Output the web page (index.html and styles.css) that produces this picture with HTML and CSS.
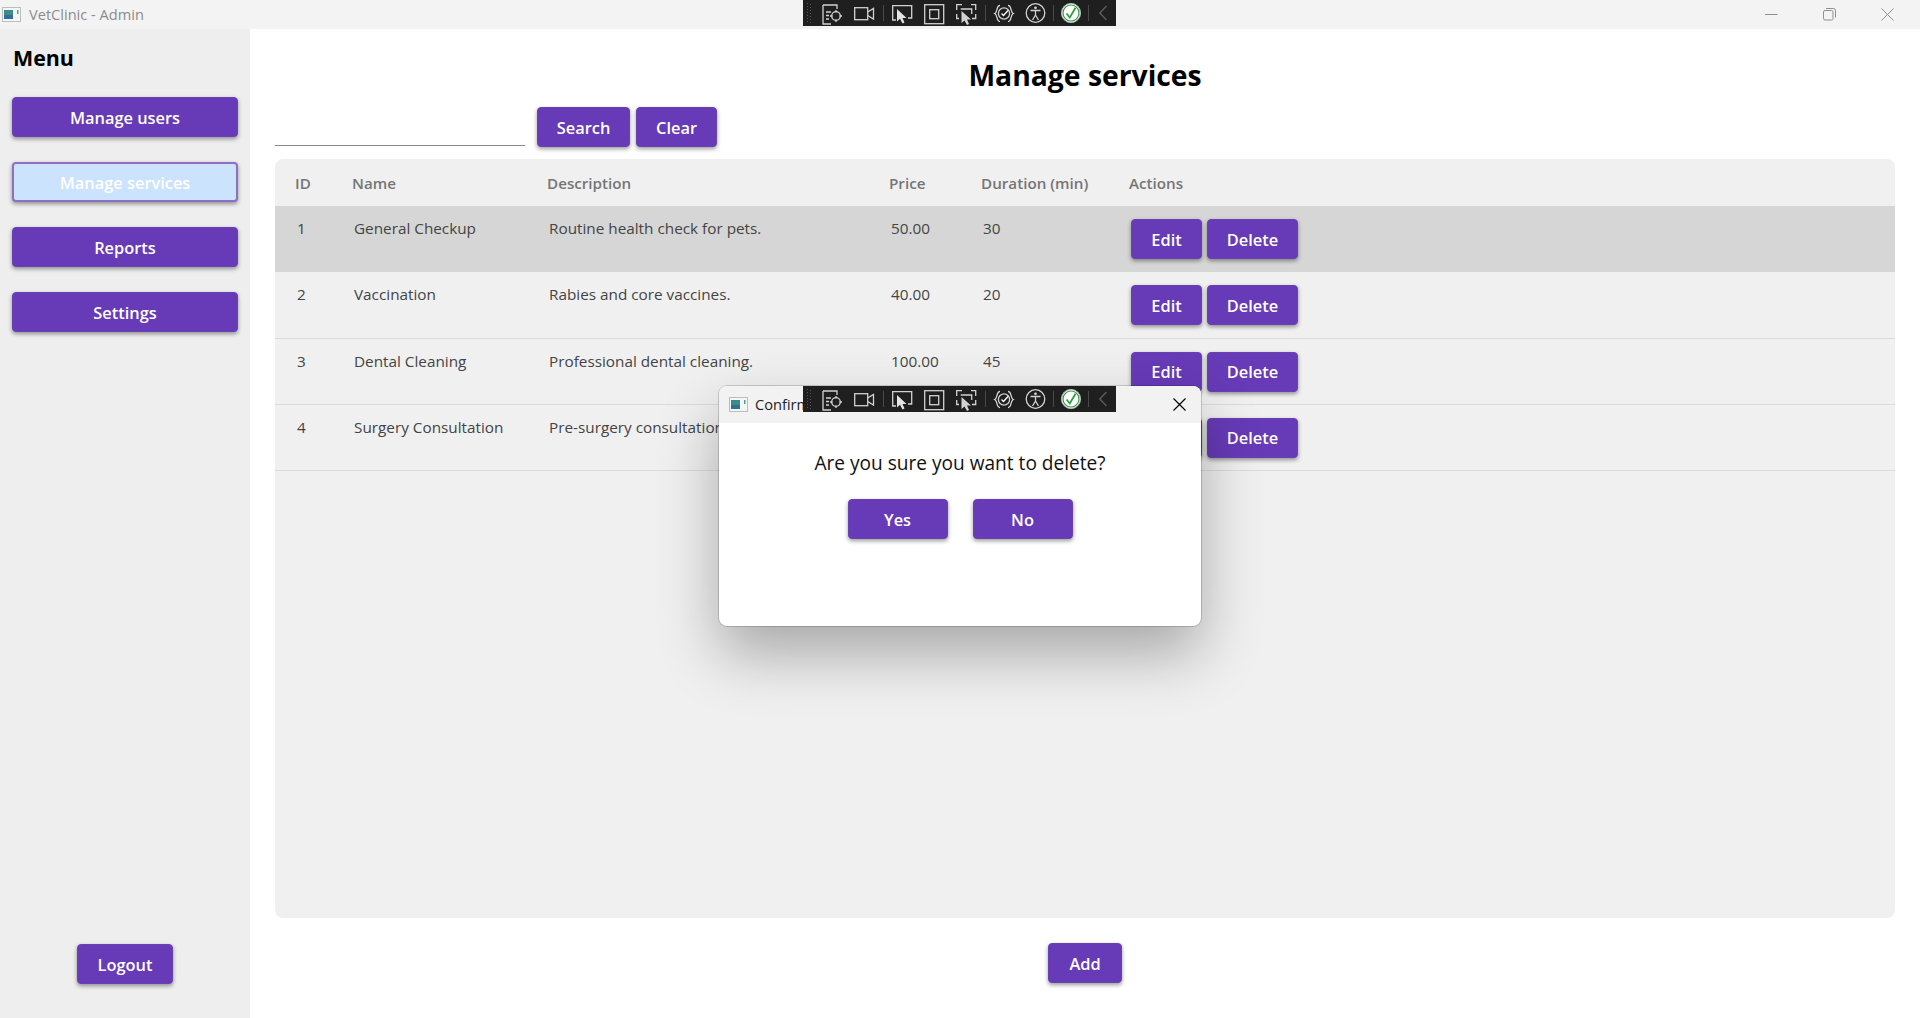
FILE: index.html
```html
<!DOCTYPE html>
<html>
<head>
    <meta charset="UTF-8">
    <title>VetClinic - Admin</title>
    <link rel="stylesheet" href="styles.css">
</head>
<body>
    <svg class="defs" width="0" height="0">
        <symbol id="app-icon" viewBox="0 0 19 15">
            <rect x="0.5" y="0.5" width="18" height="14" fill="#f4f6f6" stroke="#b9bdbd"/>
            <rect x="2" y="3" width="9" height="9" fill="#3f8a86"/>
            <rect x="2" y="8" width="9" height="4" fill="#2f6f9a"/>
            <rect x="15" y="3" width="1.5" height="4" fill="#5a9a94"/>
        </symbol>
        <symbol id="devbar" viewBox="0 0 313 26">
            <rect width="313" height="26" fill="#1f1f1f"/>
            <g fill="none" stroke="#565656" stroke-dasharray="1 2">
                <path d="M4.5 3V24M7.5 4V24"/>
            </g>
            <g fill="none" stroke="#d2d2d2" stroke-width="1.3">
                <path d="M20 5V24H28"/>
                <path d="M20 5H34V9"/>
                <path d="M23 12H28M23 15.5H26M23 19H26"/>
                <circle cx="33" cy="16" r="4.3"/>
                <path d="M33 10V12.5M33 19.5V22M27 16H29.5M36.5 16H39"/>
                <rect x="51.7" y="7.7" width="13" height="12"/>
                <path d="M64.7 12L70.5 8.5V19L64.7 15.5"/>
                <path d="M93 20H89.7V5.7H108.7V18H105"/>
                <rect x="121.7" y="4.7" width="19" height="19"/>
                <rect x="126.7" y="9.7" width="9" height="9"/>
                <path d="M153.7 10V4.7H159M168 4.7H172.7V10M153.7 14V18.5H156M169 18.5H172.7V14"/>
                <path d="M157.7 9H168.7V14"/>
                <path d="M197 5.5C193 5.5 195 12 191.7 13.5C195 15 193 21.5 197 21.5M205 5.5C209 5.5 207 12 210.3 13.5C207 15 209 21.5 205 21.5"/>
                <circle cx="201" cy="13.5" r="5.6"/>
                <path d="M198.5 13.5L200.5 15.5L205 10.5" stroke="#ffffff"/>
                <circle cx="232.5" cy="13" r="9.3"/>
                <path d="M227.5 10.5H237.5M232.5 10.5V15M232.5 15L229.5 20M232.5 15L235.5 20"/>
            </g>
            <circle cx="232.5" cy="7.8" r="1.4" fill="#d2d2d2"/>
            <path d="M94 9V21.5L97 18.8L99.5 23.5L101.5 22.5L99.5 18H103.5Z" fill="#e4e4e4"/>
            <path d="M158.5 11V23L161.5 20.5L164 25L166 24L164 19.5H168Z" fill="#d2d2d2"/>
            <g stroke="#4a4a4a">
                <path d="M80.5 5V21M182.5 5V21M250.5 5V21M285.5 5V21"/>
            </g>
            <circle cx="268" cy="13" r="9.6" fill="#f4f4f4" stroke="#b8b8b8"/>
            <circle cx="268" cy="13" r="8" fill="#ffffff" stroke="#2f9e44" stroke-width="1.2"/>
            <path d="M263.5 13.5L266.8 17.5L272.5 7.8" fill="none" stroke="#2f9e44" stroke-width="1.8"/>
            <path d="M303.5 6L296.8 13L303.5 20" fill="none" stroke="#5a5a5a" stroke-width="1.5"/>
        </symbol>
    </svg>

    <header class="titlebar">
        <svg class="app-icon"><use href="#app-icon"/></svg>
        <span class="titlebar-text">VetClinic - Admin</span>
        <div class="win-controls">
            <svg width="13" height="13" viewBox="0 0 13 13"><path d="M0 6.5H12.5" stroke="#8f8f8f"/></svg>
            <svg width="13" height="13" viewBox="0 0 13 13" fill="none" stroke="#8f8f8f"><rect x="0.5" y="2.5" width="9.5" height="9.5" rx="1.5"/><path d="M3 0.5H10.5Q12.5 .5 12.5 2.5V9.5"/></svg>
            <svg width="13" height="13" viewBox="0 0 13 13"><path d="M0.5 0.5L12.5 12.5M12.5 0.5L0.5 12.5" stroke="#8f8f8f"/></svg>
        </div>
    </header>
    <svg class="devbar devbar-top"><use href="#devbar"/></svg>

    <div class="app">
        <aside class="sidebar">
            <h2 class="menu-title">Menu</h2>
            <nav class="menu">
                <button class="btn btn-menu">Manage users</button>
                <button class="btn btn-menu btn-active">Manage services</button>
                <button class="btn btn-menu">Reports</button>
                <button class="btn btn-menu">Settings</button>
            </nav>
            <button class="btn btn-logout">Logout</button>
        </aside>

        <main class="content">
            <h1 class="page-title">Manage services</h1>
            <div class="search-row">
                <div class="search-input"></div>
                <button class="btn btn-search">Search</button>
                <button class="btn btn-clear">Clear</button>
            </div>

            <section class="table">
                <div class="row row-head">
                    <div>ID</div>
                    <div>Name</div>
                    <div>Description</div>
                    <div>Price</div>
                    <div>Duration (min)</div>
                    <div>Actions</div>
                </div>
                <div class="row row-body row-selected">
                    <div class="cell-id">1</div>
                    <div>General Checkup</div>
                    <div>Routine health check for pets.</div>
                    <div>50.00</div>
                    <div>30</div>
                    <div class="cell-actions"><button class="btn btn-edit">Edit</button><button class="btn btn-delete">Delete</button></div>
                </div>
                <div class="row row-body">
                    <div class="cell-id">2</div>
                    <div>Vaccination</div>
                    <div>Rabies and core vaccines.</div>
                    <div>40.00</div>
                    <div>20</div>
                    <div class="cell-actions"><button class="btn btn-edit">Edit</button><button class="btn btn-delete">Delete</button></div>
                </div>
                <div class="row row-body">
                    <div class="cell-id">3</div>
                    <div>Dental Cleaning</div>
                    <div>Professional dental cleaning.</div>
                    <div>100.00</div>
                    <div>45</div>
                    <div class="cell-actions"><button class="btn btn-edit">Edit</button><button class="btn btn-delete">Delete</button></div>
                </div>
                <div class="row row-body">
                    <div class="cell-id">4</div>
                    <div>Surgery Consultation</div>
                    <div>Pre-surgery consultation.</div>
                    <div>150.00</div>
                    <div>60</div>
                    <div class="cell-actions"><button class="btn btn-edit">Edit</button><button class="btn btn-delete">Delete</button></div>
                </div>
            </section>

            <div class="add-row">
                <button class="btn btn-add">Add</button>
            </div>
        </main>
    </div>

    <div class="dialog">
        <div class="dialog-title">
            <svg class="app-icon"><use href="#app-icon"/></svg>
            <span>Confirm</span>
            <svg class="dialog-close" width="13" height="13" viewBox="0 0 13 13"><path d="M0.5 0.5L12.5 12.5M12.5 0.5L0.5 12.5" stroke="#000" stroke-width="1.2"/></svg>
        </div>
        <svg class="devbar devbar-dialog"><use href="#devbar"/></svg>
        <div class="dialog-body">
            <p class="dialog-text">Are you sure you want to delete?</p>
            <div class="dialog-actions">
                <button class="btn btn-dialog">Yes</button>
                <button class="btn btn-dialog">No</button>
            </div>
        </div>
    </div>
</body>
</html>
```

FILE: styles.css
```css
html, body {
    margin: 0;
    padding: 0;
    height: 1018px;
    overflow: hidden;
}
body {
    font-family: 'Open Sans', 'Noto Sans', sans-serif;
    background-color: #fff;
    display: flex;
    flex-direction: column;
    position: relative;
}
.defs {
    position: absolute;
}

/* window chrome */
.titlebar {
    height: 29px;
    flex: none;
    background-color: #f3f3f3;
    display: flex;
    align-items: center;
    padding-left: 2px;
}
.app-icon {
    width: 19px;
    height: 15px;
    flex: none;
}
.titlebar-text {
    margin-left: 8px;
    margin-bottom: 2px;
    font-size: 14.6px;
    color: #8c8c8c;
}
.win-controls {
    margin-left: auto;
    display: flex;
    gap: 45px;
    padding-right: 26px;
}
.devbar {
    position: absolute;
    width: 313px;
    height: 26px;
}
.devbar-top {
    left: 803px;
    top: 0;
}

/* layout */
.app {
    flex: 1;
    display: flex;
    min-height: 0;
}
.sidebar {
    width: 250px;
    flex: none;
    box-sizing: border-box;
    background-color: #eee;
    padding: 0 12px 34px;
    display: flex;
    flex-direction: column;
}
.menu-title {
    margin: 14px 0 0 1px;
    font-size: 21.4px;
    line-height: 30px;
    font-weight: 700;
    color: #000;
}
.menu {
    margin-top: 24px;
    display: flex;
    flex-direction: column;
    gap: 25px;
}
.content {
    flex: 1;
    min-width: 0;
    padding: 0 25px;
    display: flex;
    flex-direction: column;
}
.page-title {
    margin: 26px 0 0;
    font-size: 28.3px;
    line-height: 40px;
    font-weight: 700;
    text-align: center;
    color: #000;
}

/* buttons */
.btn {
    font-family: inherit;
    font-size: 16.4px;
    font-weight: 600;
    color: #fff;
    background-color: #673ab7;
    border: 1px solid #6a40b5;
    border-radius: 4px;
    height: 40px;
    padding: 0;
    box-shadow: 0 2px 4px rgba(0, 0, 0, 0.4);
}
.btn-menu {
    width: 226px;
}
.btn-active {
    background-color: #cbe3fd;
    border: 2px solid #8e70c3;
}
.btn-logout {
    width: 96px;
    margin-top: auto;
    align-self: center;
}
.btn-search {
    width: 93px;
}
.btn-clear {
    width: 81px;
}
.btn-edit {
    width: 71px;
}
.btn-delete {
    width: 91px;
}
.btn-add {
    width: 74px;
}
.btn-dialog {
    width: 100px;
}

/* search */
.search-row {
    margin-top: 12px;
    display: flex;
    align-items: flex-start;
    gap: 6px;
}
.search-input {
    width: 250px;
    height: 38px;
    border-bottom: 1px solid #888;
    margin-right: 6px;
}

/* table */
.table {
    margin-top: 12px;
    flex: 1;
    background-color: #f0f0f0;
    border-radius: 8px;
    overflow: hidden;
}
.row {
    display: grid;
    grid-template-columns: 77px 195px 342px 92px 148px 1fr;
}
.row > div:first-child {
    padding-left: 20px;
}
.row-head {
    height: 47px;
    align-items: center;
    font-size: 15.2px;
    font-weight: 600;
    color: #757575;
    box-shadow: 0 1px 2px rgba(0, 0, 0, 0.08);
}
.row-body {
    height: 66.3px;
    box-sizing: border-box;
    padding: 12px 0 0 2px;
    font-size: 15.3px;
    color: #444;
    border-bottom: 1px solid #dcdcdc;
}
.row-body > div {
    line-height: 20px;
}
.row-selected {
    background-color: #d6d6d6;
    border-bottom-color: #d6d6d6;
}
.row-body > .cell-id {
    padding-left: 21px;
}
.cell-actions {
    display: flex;
    gap: 5px;
    align-items: flex-start;
    padding-top: 1px;
}
.add-row {
    padding: 25px 0 35px;
    display: flex;
    justify-content: center;
}

/* confirm dialog */
.dialog {
    position: absolute;
    left: 719px;
    top: 386px;
    width: 482px;
    height: 240px;
    background-color: #fff;
    border-radius: 8px;
    box-shadow: 0 0 0 1px rgba(0, 0, 0, 0.16), 0 28px 60px rgba(0, 0, 0, 0.3);
    overflow: hidden;
}
.dialog-title {
    height: 37px;
    background-color: #f2f2f2;
    display: flex;
    align-items: center;
    padding: 0 15px 0 10px;
    font-size: 14.6px;
    color: #222;
}
.dialog-title span {
    margin-left: 7px;
    margin-bottom: 2px;
}
.dialog-close {
    margin-left: auto;
}
.devbar-dialog {
    left: 84px;
    top: 0;
}
.dialog-body {
    display: flex;
    flex-direction: column;
    align-items: center;
}
.dialog-text {
    margin: 27px 0 0;
    font-size: 19.1px;
    line-height: 26px;
    color: #111;
}
.dialog-actions {
    margin-top: 23px;
    display: flex;
    gap: 25px;
}
```
